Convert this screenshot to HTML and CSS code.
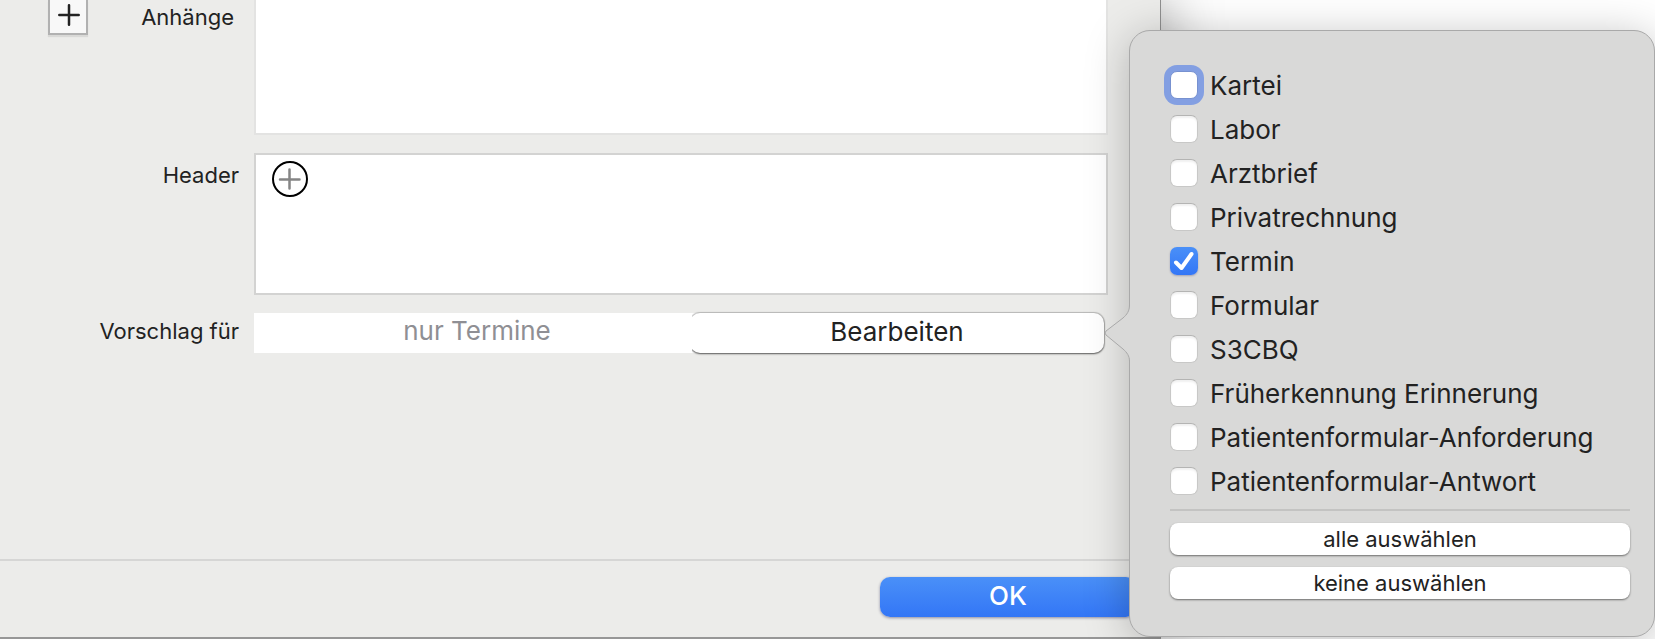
FILE: index.html
```html
<!DOCTYPE html>
<html lang="de">

<head>
    <meta charset="UTF-8">
    <title>Vorlage bearbeiten</title>
    <meta name="viewport" content="width=device-width, initial-scale=1.0">
    <link rel="stylesheet" href="styles.css">
</head>

<body>
    <main class="window">
        <form class="form">
            <div class="row row-attachments">
                <button type="button" class="add" aria-label="Anhang hinzufügen">
                    <svg width="22" height="22" viewBox="0 0 22 22">
                        <path d="M11 1.3v19.4M1.3 11h19.4" />
                    </svg>
                </button>
                <label for="attachments">Anhänge</label>
                <textarea id="attachments" class="box box-light"></textarea>
            </div>
            <div class="row row-header">
                <span class="label">Header</span>
                <div class="box">
                    <button type="button" class="add-round" aria-label="Header hinzufügen">
                        <svg width="36" height="36" viewBox="0 0 36 36">
                            <circle cx="18" cy="18" r="17" />
                            <path d="M17.5 8.5v19M8 18.5h19.5" />
                        </svg>
                    </button>
                </div>
            </div>
            <div class="row row-suggest">
                <label for="suggest">Vorschlag für</label>
                <div class="suggest">
                    <input type="text" id="suggest" value="nur Termine" readonly>
                    <button type="button">Bearbeiten</button>
                </div>
            </div>
        </form>
        <footer>
            <button type="button" class="ok">OK</button>
        </footer>
    </main>

    <aside class="popover">
        <svg class="arrow" width="27" height="64" viewBox="0 0 27 64">
            <path class="arrow-fill" d="M27 0H25.5V4C25.5 10 23 13.5 19 17L2 30Q0 32 2 34L19 48C23 51.5 25.5 55 25.5 60V64H27Z" />
            <path class="arrow-line" d="M25.5 0V4C25.5 10 23 13.5 19 17L2 30Q0 32 2 34L19 48C23 51.5 25.5 55 25.5 60V64" />
        </svg>
        <div class="options">
            <label><input type="checkbox" class="focused"> Kartei</label>
            <label><input type="checkbox"> Labor</label>
            <label><input type="checkbox"> Arztbrief</label>
            <label><input type="checkbox"> Privatrechnung</label>
            <label>
                <input type="checkbox" checked>
                <svg class="check" width="28" height="28" viewBox="0 0 28 28">
                    <path d="M6 15.5L11.5 21L21.5 7" />
                </svg>
                Termin
            </label>
            <label><input type="checkbox"> Formular</label>
            <label><input type="checkbox"> S3CBQ</label>
            <label><input type="checkbox"> Früherkennung Erinnerung</label>
            <label><input type="checkbox"> Patientenformular-Anforderung</label>
            <label><input type="checkbox"> Patientenformular-Antwort</label>
        </div>
        <div class="actions">
            <button type="button">alle auswählen</button>
            <button type="button">keine auswählen</button>
        </div>
    </aside>
</body>

</html>
```
FILE: styles.css
```css
* {
    box-sizing: border-box;
}

body {
    margin: 0;
    min-height: 100vh;
    display: flex;
    position: relative;
    overflow: hidden;
    background-color: white;
    color: #222;
    font-family: Inter, "Liberation Sans", sans-serif;
    font-size: 22px;
}

button,
input {
    margin: 0;
    padding: 0;
    border: none;
    font-family: inherit;
    color: inherit;
}

svg {
    display: block;
    fill: none;
}

/* Window */
.window {
    flex: 1;
    margin-right: 494px;
    display: flex;
    flex-direction: column;
    background-color: #ececea;
    border-right: 1px solid #8f8f8f;
    border-bottom: 2px solid #979797;
    box-shadow: 0 0 56px rgba(0, 0, 0, 0.4);
}

.form {
    display: flex;
    flex-direction: column;
    gap: 18px;
    padding-right: 52px;
}

.row {
    display: flex;
}

.row label,
.label {
    width: 254px;
    padding-right: 15px;
    line-height: 24px;
    text-align: right;
}

.row-attachments {
    height: 135px;
}

.row-attachments label {
    flex: 1;
    padding-top: 5px;
    padding-right: 20px;
}

.row-attachments .box {
    width: calc(100% - 254px);
}

.row-header {
    height: 142px;
}

.label {
    padding-top: 10px;
}

.row-suggest label {
    line-height: 36px;
}

.box {
    flex: 1;
    padding: 6px 16px;
    background-color: white;
    border: 2px solid #d3d3d2;
}

.box-light {
    flex: none;
    border-color: #e3e3e2;
    border-top: none;
    resize: none;
    outline: none;
}

.add {
    width: 40px;
    height: 35px;
    margin-left: 48px;
    padding: 0 0 3px 8px;
    background-color: #f8f8f8;
    border: 2px solid #b1b1b1;
    border-top: none;
    box-shadow: 0 2px 1px rgba(0, 0, 0, 0.08);
}

.add path {
    stroke: #222;
    stroke-width: 2.5;
    stroke-linecap: round;
}

.add-round {
    display: block;
    background: none;
}

.add-round circle {
    stroke: black;
    stroke-width: 2;
}

.add-round path {
    stroke: #858585;
    stroke-width: 2.5;
    stroke-linecap: round;
}

.suggest {
    flex: 1;
    display: flex;
    height: 40px;
    margin-right: 4px;
    font-size: 26px;
}

.suggest input {
    flex: 446;
    min-width: 0;
    padding-bottom: 6px;
    background-color: white;
    color: #8f8f94;
    font-size: inherit;
    text-align: center;
}

.suggest button {
    flex: 414;
    margin-left: -10px;
    padding-bottom: 3px;
    background-color: white;
    border-radius: 10px;
    box-shadow: 0 0 1px 1px rgba(0, 0, 0, 0.2), 0 1px 2px rgba(0, 0, 0, 0.5);
    /* no edge towards the field on the left */
    clip-path: inset(-4px -4px -4px 2px);
    font-size: inherit;
}

footer {
    margin-top: auto;
    padding: 16px 24px 20px;
    display: flex;
    justify-content: flex-end;
    border-top: 2px solid #d6d6d5;
}

.ok {
    width: 256px;
    height: 40px;
    padding-bottom: 3px;
    border-radius: 10px;
    background: linear-gradient(#4a90f8, #3376f6);
    box-shadow: 0 1px 3px rgba(0, 0, 60, 0.4);
    color: white;
    font-size: 26px;
    font-weight: 500;
}

/* Popover */
.popover {
    position: absolute;
    top: 30px;
    right: 0;
    width: 526px;
    padding: 32px 24px 37px 40px;
    background-color: #d9d9d8;
    border: 1px solid #a9a9a9;
    border-radius: 21px;
    box-shadow: 0 6px 44px rgba(0, 0, 0, 0.25);
}

.arrow {
    position: absolute;
    top: 270px;
    left: -26px;
}

.arrow-fill {
    fill: #d9d9d8;
}

.arrow-line {
    stroke: #a9a9a9;
}

.options {
    padding-bottom: 6px;
    border-bottom: 2px solid #c3c3c2;
    font-size: 26px;
}

.options label {
    display: flex;
    align-items: center;
    gap: 12px;
    height: 44px;
    white-space: nowrap;
}

.options input {
    appearance: none;
    width: 28px;
    height: 28px;
    background-color: white;
    border: 1px solid #c8c8c7;
    border-top-color: #b4b4b3;
    border-radius: 7px;
    box-shadow: inset 0 2px 2px rgba(0, 0, 0, 0.06);
}

.options .focused {
    border-color: #7791d0;
    box-shadow: 0 0 0 6px #839fe2;
}

.options input:checked {
    background: linear-gradient(#4a90f8, #3376f6);
    border: none;
    box-shadow: 0 1px 2px rgba(0, 0, 80, 0.25);
}

/* sits on top of the ticked box */
.check {
    margin-left: -40px;
    z-index: 1;
}

.check path {
    stroke: white;
    stroke-width: 4;
    stroke-linecap: round;
    stroke-linejoin: round;
}

.actions {
    display: flex;
    flex-direction: column;
    gap: 12px;
    padding-top: 12px;
}

.actions button {
    height: 32px;
    padding-bottom: 1px;
    background-color: white;
    border-radius: 8px;
    box-shadow: 0 1px 2px rgba(0, 0, 0, 0.5);
    font-size: 22px;
}
```
